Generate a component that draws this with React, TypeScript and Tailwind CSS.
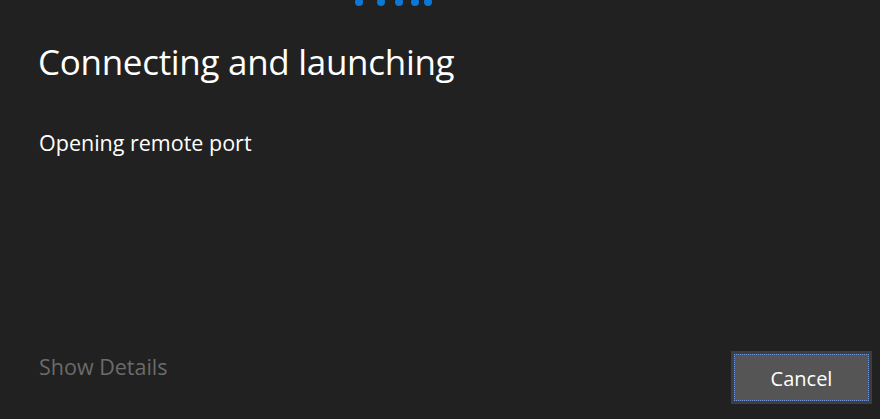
import React from "react";

export default function App() {
  const dots = [359, 381, 399, 415, 428];
  return (
    <div
      className="relative w-[880px] h-[419px] bg-[#212121] overflow-hidden flex flex-col"
      style={{ fontFamily: '"Open Sans", "Noto Sans", sans-serif' }}
    >
      {dots.map((x, i) => (
        <div
          key={i}
          className="absolute w-[8px] h-[8px] rounded-full bg-[#0a78d4]"
          style={{ left: x - 4, top: -2 }}
        />
      ))}
      <div className="pl-[38px] pt-[38px] text-[35px] leading-[48px] text-white tracking-[-0.3px]">
        Connecting and launching
      </div>
      <div className="pl-[39px] mt-[43px] text-[21.5px] leading-[28px] text-white">
        Opening remote port
      </div>
      <div className="flex-1" />
      <div className="flex items-end justify-between pl-[39px] pr-[8px] pb-[15px]">
        <div className="text-[21.5px] leading-[28px] text-[#6b6b6b] mb-[23px]">Show Details</div>
        <button className="w-[141px] h-[53px] bg-[#555555] border-[3px] border-[#3e3e3e] p-0">
          <div className="w-full h-full border border-dotted border-[#6f95d8] flex items-center justify-center pt-[2px] text-[20px] text-white">
            Cancel
          </div>
        </button>
      </div>
    </div>
  );
}
